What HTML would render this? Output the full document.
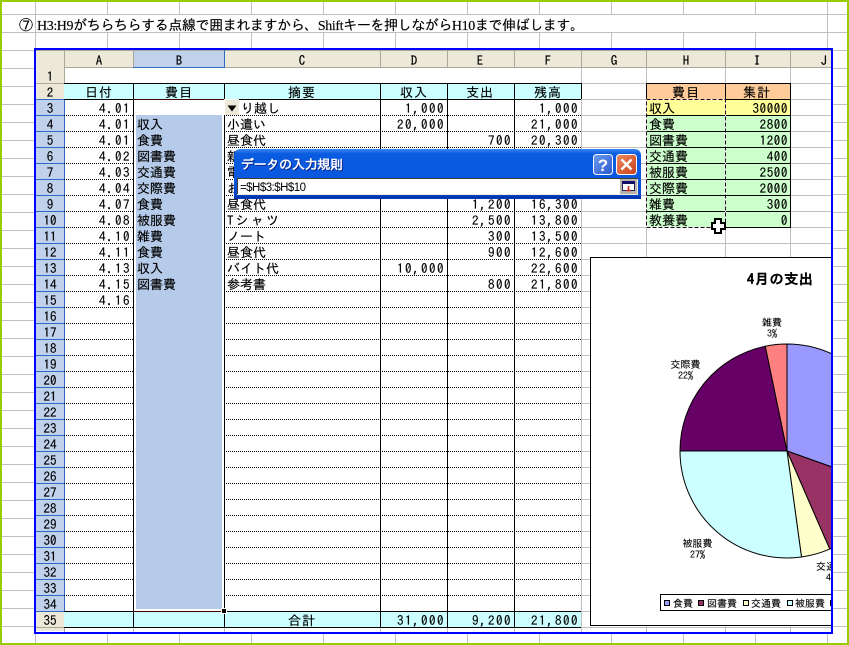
<!DOCTYPE html>
<html lang="ja"><head><meta charset="utf-8"><title>Excel</title>
<style>
html,body{margin:0;padding:0;background:#fff;width:849px;height:645px;overflow:hidden}
svg{display:block}
text{font-family:"IPAGothic","Noto Sans CJK JP",sans-serif;font-size:13px;fill:#000;stroke:#000;stroke-width:.15px}
.n{letter-spacing:1.5px;text-anchor:end}
.c{text-anchor:middle}
.s{font-size:10px;stroke-width:.1px}
.sc{font-size:10px;text-anchor:middle;stroke-width:.1px}
</style></head><body>
<svg width="849" height="645" viewBox="0 0 849 645" xmlns="http://www.w3.org/2000/svg">
<defs>
<clipPath id="cp"><rect x="590" y="257" width="241" height="370"/></clipPath>
<linearGradient id="tb" x1="0" y1="0" x2="0" y2="1"><stop offset="0" stop-color="#3a86f0"/><stop offset=".1" stop-color="#0a5be0"/><stop offset=".55" stop-color="#0a58e0"/><stop offset="1" stop-color="#0242c4"/></linearGradient>
<linearGradient id="hb" x1="0" y1="0" x2="1" y2="1"><stop offset="0" stop-color="#6f9bf0"/><stop offset="1" stop-color="#2a58d0"/></linearGradient>
<linearGradient id="cb" x1="0" y1="0" x2="1" y2="1"><stop offset="0" stop-color="#ee8a60"/><stop offset="1" stop-color="#c8401c"/></linearGradient>
</defs>
<rect width="849" height="645" fill="#fff"/>
<!-- outer grid -->
<path stroke="#c0c0c0" stroke-width="1" fill="none" shape-rendering="crispEdges" d="M2 14.5H847M2 32.5H847M2 50.5H847M2 68.5H847M2 86.5H847M2 104.5H847M2 122.5H847M2 140.5H847M2 158.5H847M2 176.5H847M2 194.5H847M2 212.5H847M2 230.5H847M2 248.5H847M2 266.5H847M2 284.5H847M2 302.5H847M2 320.5H847M2 338.5H847M2 356.5H847M2 374.5H847M2 392.5H847M2 410.5H847M2 428.5H847M2 446.5H847M2 464.5H847M2 482.5H847M2 500.5H847M2 518.5H847M2 536.5H847M2 554.5H847M2 572.5H847M2 590.5H847M2 608.5H847M2 626.5H847
M35.5 2V643M107.5 2V14M179.5 2V14M251.5 2V14M323.5 2V14M395.5 2V14M467.5 2V14M539.5 2V14M611.5 2V14M683.5 2V14M755.5 2V14M827.5 2V14
M107.5 32V643M179.5 32V643M251.5 32V643M323.5 32V643M395.5 32V643M467.5 32V643M539.5 32V643M611.5 32V643M683.5 32V643M755.5 32V643M827.5 14V643"/>
<text x="19" y="30" style="font-size:14px">⑦</text>
<text x="37" y="30" textLength="547" lengthAdjust="spacing" style="font-family:'Liberation Serif','IPAGothic',serif;font-size:14px">H3:H9がちらちらする点線で囲まれますから、Shiftキーを押しながらH10まで伸ばします。</text>

<!-- sheet -->
<rect x="35" y="49" width="797" height="584" fill="#fff"/>
<!-- right side gridlines -->
<path stroke="#c0c0c0" fill="none" shape-rendering="crispEdges" d="M581 83.5H831M581 99.5H831M581 115.5H831M581 131.5H831M581 147.5H831M581 163.5H831M581 179.5H831M581 195.5H831M581 211.5H831M581 227.5H831M581 243.5H831M581 259.5H831M581 275.5H831M581 291.5H831M581 307.5H831M581 323.5H831M581 339.5H831M581 355.5H831M581 371.5H831M581 387.5H831M581 403.5H831M581 419.5H831M581 435.5H831M581 451.5H831M581 467.5H831M581 483.5H831M581 499.5H831M581 515.5H831M581 531.5H831M581 547.5H831M581 563.5H831M581 579.5H831M581 595.5H831M581 611.5H831M64 627.5H831
M581.5 67V632M646.5 67V632M725.5 67V632M790.5 67V632M64.5 627V632M133.5 627V632M224.5 627V632M380.5 627V632M447.5 627V632M514.5 627V632"/>
<!-- column headers -->
<rect x="36" y="50" width="795" height="17" fill="#ece9d8"/>
<rect x="133" y="51" width="91" height="16" fill="#c0d1ec"/>
<path stroke="#aca899" fill="none" shape-rendering="crispEdges" d="M36 50.5H831M36 67.5H831M64.5 50V67M133.5 50V67M380.5 50V67M447.5 50V67M514.5 50V67M581.5 50V67M646.5 50V67M725.5 50V67M790.5 50V67"/>
<path stroke="#316ac5" fill="none" shape-rendering="crispEdges" d="M224.5 50V67M133 67.5H225"/>
<!-- row headers -->
<rect x="36" y="67" width="28" height="32" fill="#ece9d8"/>
<rect x="36" y="99" width="28" height="512" fill="#c0d1ec"/>
<rect x="36" y="611" width="28" height="20" fill="#ece9d8"/>
<path stroke="#aca899" fill="none" shape-rendering="crispEdges" d="M36 83.5H64M64.5 67V99M64.5 611V632M36 627.5H64"/>
<path stroke="#316ac5" fill="none" shape-rendering="crispEdges" d="M36 99.5H64M36 115.5H64M36 131.5H64M36 147.5H64M36 163.5H64M36 179.5H64M36 195.5H64M36 211.5H64M36 227.5H64M36 243.5H64M36 259.5H64M36 275.5H64M36 291.5H64M36 307.5H64M36 323.5H64M36 339.5H64M36 355.5H64M36 371.5H64M36 387.5H64M36 403.5H64M36 419.5H64M36 435.5H64M36 451.5H64M36 467.5H64M36 483.5H64M36 499.5H64M36 515.5H64M36 531.5H64M36 547.5H64M36 563.5H64M36 579.5H64M36 595.5H64M36 611.5H64M64.5 99V611"/>
<!-- table fills -->
<rect x="64" y="84" width="517" height="15" fill="#ccffff"/>
<rect x="64" y="611" width="517" height="16" fill="#ccffff"/>
<!-- dotted rows -->
<path stroke="#000" stroke-dasharray="1 1" fill="none" shape-rendering="crispEdges" d="M64 115.5H581M64 131.5H581M64 147.5H581M64 163.5H581M64 179.5H581M64 195.5H581M64 211.5H581M64 227.5H581M64 243.5H581M64 259.5H581M64 275.5H581M64 291.5H581M64 307.5H581M64 323.5H581M64 339.5H581M64 355.5H581M64 371.5H581M64 387.5H581M64 403.5H581M64 419.5H581M64 435.5H581M64 451.5H581M64 467.5H581M64 483.5H581M64 499.5H581M64 515.5H581M64 531.5H581M64 547.5H581M64 563.5H581M64 579.5H581M64 595.5H581"/>
<!-- solid table lines -->
<path stroke="#000" fill="none" shape-rendering="crispEdges" d="M64 83.5H581M64 99.5H581M64 611.5H581M64 627.5H581M133.5 83V627M224.5 83V627M380.5 83V627M447.5 83V627M514.5 83V627"/>
<path stroke="#000" fill="none" shape-rendering="crispEdges" d="M581.5 83V99"/>
<!-- selection -->
<rect x="134" y="100" width="90" height="511" fill="#fff"/>
<rect x="136" y="115" width="86" height="494" fill="#b6cbe9"/>
<path stroke="#000" fill="none" shape-rendering="crispEdges" d="M133.5 99V611M224.5 99V611"/>
<path stroke="#400000" fill="none" shape-rendering="crispEdges" d="M133 99.5H225M133 611.5H225"/>
<path stroke="#fff" fill="none" shape-rendering="crispEdges" d="M225.5 99V609"/>
<rect x="221" y="608" width="6" height="6" fill="#fff"/>
<rect x="222" y="609" width="4" height="4" fill="#000"/>
<!-- dropdown -->
<rect x="224" y="99" width="15" height="16" fill="#ece9d8"/>
<path stroke="#fff" fill="none" shape-rendering="crispEdges" d="M224.5 115V99.5H239"/>
<path fill="#000" d="M227.5 105.5H236.5L232 111.5Z"/>

<!-- column letters -->
<g class="c">
<text class="c" x="99" y="65">A</text><text class="c" x="179" y="65">B</text><text class="c" x="302" y="65">C</text><text class="c" x="414" y="65">D</text><text class="c" x="480" y="65">E</text><text class="c" x="548" y="65">F</text><text class="c" x="614" y="65">G</text><text class="c" x="686" y="65">H</text><text class="c" x="757" y="65">I</text><text class="c" x="824" y="65">J</text>
</g>
<!-- row numbers -->
<text class="c" x="50" y="81">1</text><text class="c" x="50" y="97">2</text><text class="c" x="50" y="113">3</text><text class="c" x="50" y="129">4</text><text class="c" x="50" y="145">5</text><text class="c" x="50" y="161">6</text><text class="c" x="50" y="177">7</text><text class="c" x="50" y="193">8</text><text class="c" x="50" y="209">9</text><text class="c" x="50" y="225">10</text><text class="c" x="50" y="241">11</text><text class="c" x="50" y="257">12</text><text class="c" x="50" y="273">13</text><text class="c" x="50" y="289">14</text><text class="c" x="50" y="305">15</text><text class="c" x="50" y="321">16</text><text class="c" x="50" y="337">17</text><text class="c" x="50" y="353">18</text><text class="c" x="50" y="369">19</text><text class="c" x="50" y="385">20</text><text class="c" x="50" y="401">21</text><text class="c" x="50" y="417">22</text><text class="c" x="50" y="433">23</text><text class="c" x="50" y="449">24</text><text class="c" x="50" y="465">25</text><text class="c" x="50" y="481">26</text><text class="c" x="50" y="497">27</text><text class="c" x="50" y="513">28</text><text class="c" x="50" y="529">29</text><text class="c" x="50" y="545">30</text><text class="c" x="50" y="561">31</text><text class="c" x="50" y="577">32</text><text class="c" x="50" y="593">33</text><text class="c" x="50" y="609">34</text><text class="c" x="50" y="625">35</text>
<!-- row 2 headers -->
<text class="c" x="99" y="97" style="letter-spacing:1px">日付</text><text class="c" x="179" y="97" style="letter-spacing:1px">費目</text><text class="c" x="302" y="97" style="letter-spacing:1px">摘要</text><text class="c" x="414" y="97" style="letter-spacing:1px">収入</text><text class="c" x="480" y="97" style="letter-spacing:1px">支出</text><text class="c" x="548" y="97" style="letter-spacing:1px">残高</text>
<!-- dates -->
<text class="n" x="131" y="113">4.01</text><text class="n" x="131" y="129">4.01</text><text class="n" x="131" y="145">4.01</text><text class="n" x="131" y="161">4.02</text><text class="n" x="131" y="177">4.03</text><text class="n" x="131" y="193">4.04</text><text class="n" x="131" y="209">4.07</text><text class="n" x="131" y="225">4.08</text><text class="n" x="131" y="241">4.10</text><text class="n" x="131" y="257">4.11</text><text class="n" x="131" y="273">4.13</text><text class="n" x="131" y="289">4.15</text><text class="n" x="131" y="305">4.16</text>
<!-- B -->
<text x="137" y="129">収入</text><text x="137" y="145">食費</text><text x="137" y="161">図書費</text><text x="137" y="177">交通費</text><text x="137" y="193">交際費</text><text x="137" y="209">食費</text><text x="137" y="225">被服費</text><text x="137" y="241">雑費</text><text x="137" y="257">食費</text><text x="137" y="273">収入</text><text x="137" y="289">図書費</text>
<!-- C -->
<text x="241" y="113">り越し</text><text x="227" y="129">小遣い</text><text x="227" y="145">昼食代</text><text x="227" y="161">新聞代</text><text x="227" y="177">電話代</text><text x="227" y="193">お菓子</text><text x="227" y="209">昼食代</text><text x="227" y="225" textLength="52" lengthAdjust="spacing">Tシャツ</text><text x="227" y="241">ノート</text><text x="227" y="257">昼食代</text><text x="227" y="273">バイト代</text><text x="227" y="289">参考書</text>
<!-- numbers -->
<text class="n" x="445" y="113">1,000</text><text class="n" x="445" y="129">20,000</text><text class="n" x="445" y="273">10,000</text>
<text class="n" x="512" y="145">700</text><text class="n" x="512" y="209">1,200</text><text class="n" x="512" y="225">2,500</text><text class="n" x="512" y="241">300</text><text class="n" x="512" y="257">900</text><text class="n" x="512" y="289">800</text>
<text class="n" x="579" y="113">1,000</text><text class="n" x="579" y="129">21,000</text><text class="n" x="579" y="145">20,300</text><text class="n" x="579" y="209">16,300</text><text class="n" x="579" y="225">13,800</text><text class="n" x="579" y="241">13,500</text><text class="n" x="579" y="257">12,600</text><text class="n" x="579" y="273">22,600</text><text class="n" x="579" y="289">21,800</text>
<!-- totals -->
<text class="c" x="302" y="625" style="letter-spacing:1px">合計</text>
<text class="n" x="445" y="625">31,000</text><text class="n" x="512" y="625">9,200</text><text class="n" x="579" y="625">21,800</text>

<!-- H:I table -->
<rect x="646" y="83" width="145" height="16" fill="#ffcc99"/>
<rect x="646" y="99" width="145" height="16" fill="#ffff99"/>
<rect x="646" y="115" width="145" height="112" fill="#ccffcc"/>
<path stroke="#000" fill="none" shape-rendering="crispEdges" d="M646 83.5H791M646 99.5H791M646 115.5H791M646 131.5H791M646 147.5H791M646 163.5H791M646 179.5H791M646 195.5H791M646 211.5H791M646 227.5H791M646.5 83V228M725.5 83V228M790.5 83V228"/>
<rect x="646.5" y="99.5" width="79" height="128" fill="none" stroke="#fff" shape-rendering="crispEdges"/>
<rect x="646.5" y="99.5" width="79" height="128" fill="none" stroke="#200020" stroke-dasharray="4 2" shape-rendering="crispEdges"/>
<text class="c" x="686" y="97" style="letter-spacing:1px">費目</text><text class="c" x="757" y="97" style="letter-spacing:1px">集計</text>
<text x="649" y="113">収入</text><text x="649" y="129">食費</text><text x="649" y="145">図書費</text><text x="649" y="161">交通費</text><text x="649" y="177">被服費</text><text x="649" y="193">交際費</text><text x="649" y="209">雑費</text><text x="649" y="225">教養費</text>
<text x="788" y="113" style="text-anchor:end;letter-spacing:.6px">30000</text><text x="788" y="129" style="text-anchor:end;letter-spacing:.6px">2800</text><text x="788" y="145" style="text-anchor:end;letter-spacing:.6px">1200</text><text x="788" y="161" style="text-anchor:end;letter-spacing:.6px">400</text><text x="788" y="177" style="text-anchor:end;letter-spacing:.6px">2500</text><text x="788" y="193" style="text-anchor:end;letter-spacing:.6px">2000</text><text x="788" y="209" style="text-anchor:end;letter-spacing:.6px">300</text><text x="788" y="225" style="text-anchor:end;letter-spacing:.6px">0</text>
<!-- cursor -->
<path d="M715 219h6v4h4v6h-4v4h-6v-4h-3v-6h3z" fill="#fff" stroke="#000" stroke-width="2" shape-rendering="crispEdges"/>

<!-- chart -->
<g clip-path="url(#cp)">
<rect x="590.5" y="257.5" width="260" height="368" fill="#fff" stroke="#000" shape-rendering="crispEdges"/>
<g stroke="#000" stroke-width="1" stroke-linejoin="round">
<path d="M787 451V344A107 107 0 0 1 887.8 486.9Z" fill="#9999ff"/>
<path d="M787 451L887.8 486.9A107 107 0 0 1 829.7 549.1Z" fill="#993366"/>
<path d="M787 451L829.7 549.1A107 107 0 0 1 801.5 557Z" fill="#ffffcc"/>
<path d="M787 451L801.5 557A107 107 0 0 1 680 451Z" fill="#ccffff"/>
<path d="M787 451H680A107 107 0 0 1 765.3 346.2Z" fill="#660066"/>
<path d="M787 451L765.3 346.2A107 107 0 0 1 787 344Z" fill="#ff8080"/>
</g>
<text x="747" y="284" textLength="66" lengthAdjust="spacing" style="font-size:14px;font-weight:bold">4月の支出</text>
<text class="sc" x="772" y="326">雑費</text><text class="sc" x="772" y="337">3%</text>
<text class="sc" x="685.5" y="368">交際費</text><text class="sc" x="685.5" y="379">22%</text>
<text class="sc" x="697.5" y="547">被服費</text><text class="sc" x="697.5" y="558">27%</text>
<text class="s" x="816" y="570">交通費</text><text class="s" x="826" y="581">4%</text>
<rect x="660.5" y="594.5" width="200" height="16" fill="#fff" stroke="#000" shape-rendering="crispEdges"/>
<g stroke="#000" shape-rendering="crispEdges">
<rect x="664.5" y="600.5" width="5" height="5" fill="#9999ff"/>
<rect x="698.5" y="600.5" width="5" height="5" fill="#993366"/>
<rect x="743.5" y="600.5" width="5" height="5" fill="#ffffcc"/>
<rect x="787.5" y="600.5" width="5" height="5" fill="#ccffff"/>
<rect x="830.5" y="600.5" width="5" height="5" fill="#660066"/>
</g>
<text class="s" x="673" y="607">食費</text><text class="s" x="707" y="607">図書費</text><text class="s" x="751" y="607">交通費</text><text class="s" x="795" y="607">被服費</text>
</g>

<!-- dialog -->
<path d="M234 198.5V156Q234 149 241 149H634Q641 149 641 156V198.5Z" fill="url(#tb)"/>
<path d="M234 196H641V199H234Z" fill="#0035b4"/>
<text x="241" y="169" textLength="102" lengthAdjust="spacing" style="font-size:13px;font-weight:bold;fill:#fff;stroke:none;filter:drop-shadow(1px 1px 0 #0a2a90)">データの入力規則</text>
<rect x="593.5" y="154.5" width="19" height="20" rx="3" fill="url(#hb)" stroke="#fff"/>
<text x="603" y="171" style="font-family:'Liberation Sans',sans-serif;font-size:17px;font-weight:bold;fill:#fff;stroke:none;text-anchor:middle">?</text>
<rect x="616.5" y="154.5" width="20" height="20" rx="3" fill="url(#cb)" stroke="#fff"/>
<path d="M621.5 159.5L631.5 169.5M631.5 159.5L621.5 169.5" stroke="#fff" stroke-width="2.4" fill="none"/>
<rect x="237" y="178" width="401" height="17" fill="#ece9d8"/>
<rect x="238" y="179" width="399" height="15" fill="#fff"/>
<path stroke="#40403a" fill="none" shape-rendering="crispEdges" d="M237.5 194V178.5H638"/>
<text x="240" y="191" textLength="66" lengthAdjust="spacing" style="font-family:'Liberation Sans',sans-serif;font-size:11.5px;stroke:none">=$H$3:$H$10</text>
<rect x="620" y="179" width="17" height="15" fill="#b8b4a8"/>
<rect x="622.5" y="181.5" width="12" height="9" fill="#fff" stroke="#20205a" stroke-width="1" shape-rendering="crispEdges"/>
<rect x="622" y="181" width="13" height="3" fill="#10106a"/>
<path d="M628.5 186V190M626.5 190.5H630.5" stroke="#d83020" stroke-width="1.6" fill="none"/>

<!-- blue frame -->
<rect x="35" y="49" width="797" height="584" fill="none" stroke="#0000ff" stroke-width="2"/>
<!-- green frame -->
<rect x="1" y="1" width="847" height="643" fill="none" stroke="#99cc00" stroke-width="2"/>
</svg>
</body></html>
